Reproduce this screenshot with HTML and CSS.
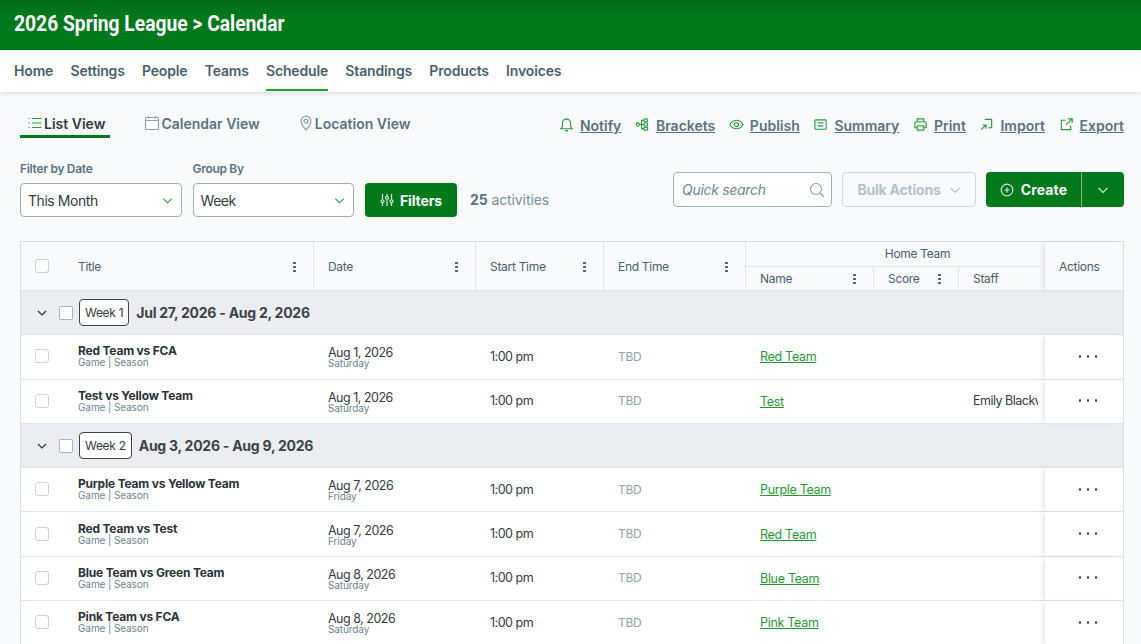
FILE: index.html
```html
<!DOCTYPE html>
<html lang="en">
<head>
  <meta charset="UTF-8">
  <title>2026 Spring League &gt; Calendar</title>
  <link rel="stylesheet" href="styles.css">
</head>
<body>
  <header class="topbar">
    <h1>2026 Spring League &gt; Calendar</h1>
  </header>
  <nav class="mainnav">
    <a href="#">Home</a>
    <a href="#">Settings</a>
    <a href="#">People</a>
    <a href="#">Teams</a>
    <a href="#" class="active">Schedule</a>
    <a href="#">Standings</a>
    <a href="#">Products</a>
    <a href="#">Invoices</a>
  </nav>

  <main class="content">
    <div class="viewbar">
      <div class="views">
        <a href="#" class="view active">
          <svg width="16" height="16" viewBox="0 0 16 16" class="ic-green"><path d="M1.5 3.5h1.200M1.500 8h1.200M1.500 12.500h1.200M5 3.500h9.500M5 8h9.500M5 12.500h9.500"/></svg>
          List View</a>
        <a href="#" class="view">
          <svg width="16" height="16" viewBox="0 0 16 16" class="ic-grey"><rect x="1.500" y="2.500" width="13" height="12" rx="1"/><path d="M1.500 5.500h13M4.500 1v2.500M11.500 1v2.500"/></svg>
          Calendar View</a>
        <a href="#" class="view">
          <svg width="16" height="16" viewBox="0 0 16 16" class="ic-grey"><path d="M8 15C5 11.500 3 9 3 6.200a5 5 0 0 1 10 0C13 9 11 11.500 8 15z"/><circle cx="8" cy="6.200" r="2"/></svg>
          Location View</a>
      </div>
      <div class="actions">
        <a href="#"><svg width="15" height="15" viewBox="0 0 16 16" class="ic-green"><path d="M2 12.500c1.200-1 1.700-2 1.700-3.500V6.500a4.300 4.300 0 0 1 8.600 0V9c0 1.500.5 2.500 1.700 3.500zM6.300 14.500h3.400M8 1v1"/></svg><span>Notify</span></a>
        <a href="#"><svg width="15" height="15" viewBox="0 0 16 16" class="ic-green"><circle cx="3" cy="8" r="1.700"/><rect x="9.500" y="2" width="4" height="3.200" rx="1"/><rect x="9.500" y="6.400" width="4" height="3.200" rx="1"/><rect x="9.500" y="10.800" width="4" height="3.200" rx="1"/><path d="M4.700 8h4.800M7 8V3.600h2.500M7 8v4.400h2.500"/></svg><span>Brackets</span></a>
        <a href="#"><svg width="15" height="15" viewBox="0 0 16 16" class="ic-green"><path d="M1 8c1.700-3 4-4.500 7-4.500S13.300 5 15 8c-1.700 3-4 4.500-7 4.500S2.700 11 1 8z"/><circle cx="8" cy="8" r="2.200"/></svg><span>Publish</span></a>
        <a href="#"><svg width="15" height="15" viewBox="0 0 16 16" class="ic-green"><rect x="2" y="3" width="12" height="10" rx="1"/><path d="M5 6.300h6M5 9.500h6"/></svg><span>Summary</span></a>
        <a href="#"><svg width="15" height="15" viewBox="0 0 16 16" class="ic-green"><path d="M4.500 5V2h7v3M4.500 11.500H2V6.500A1.500 1.500 0 0 1 3.500 5h9A1.500 1.500 0 0 1 14 6.500v5h-2.500"/><rect x="4.500" y="9.500" width="7" height="4.500"/></svg><span>Print</span></a>
        <a href="#"><svg width="15" height="15" viewBox="0 0 16 16" class="ic-green"><path d="M6 2.500h7.500v9H10M2.500 13.500 7.500 8.500M3.500 8.500h4v4"/></svg><span>Import</span></a>
        <a href="#"><svg width="15" height="15" viewBox="0 0 16 16" class="ic-green"><path d="M7 3.500H2.500v10h10V9M9.500 2H14v4.500M14 2 7.500 8.500"/></svg><span>Export</span></a>
      </div>
    </div>

    <div class="filterbar">
      <div class="filters">
        <div class="field">
          <label>Filter by Date</label>
          <div class="select">This Month
            <svg width="11" height="11" viewBox="0 0 12 12" class="ic-green"><path d="M1.500 4 6 8.500 10.500 4"/></svg></div>
        </div>
        <div class="field">
          <label>Group By</label>
          <div class="select">Week
            <svg width="11" height="11" viewBox="0 0 12 12" class="ic-green"><path d="M1.500 4 6 8.500 10.500 4"/></svg></div>
        </div>
        <button class="btn-green btn-filters">
          <svg width="14" height="14" viewBox="0 0 14 14" class="ic-white"><path d="M2.500 1v5.500M2.500 10v3M7 1v2M7 6.500V13M11.500 1v5.500M11.500 10v3"/><circle cx="2.500" cy="8.300" r="1.500"/><circle cx="7" cy="4.800" r="1.500"/><circle cx="11.500" cy="8.300" r="1.500"/></svg>
          Filters</button>
        <div class="count"><b>25</b> activities</div>
      </div>
      <div class="tools">
        <div class="search">Quick search
          <svg width="16" height="16" viewBox="0 0 16 16" class="ic-grey"><circle cx="7" cy="7" r="5.500"/><path d="M11 11l4 4"/></svg></div>
        <button class="btn-bulk">Bulk Actions
          <svg width="12" height="12" viewBox="0 0 12 12"><path d="M1.500 4 6 8.500 10.500 4"/></svg></button>
        <div class="create">
          <button class="btn-green btn-create">
            <svg width="14" height="14" viewBox="0 0 14 14" class="ic-white"><circle cx="7" cy="7" r="5.800"/><path d="M7 4.500v5M4.500 7h5"/></svg>
            Create</button>
          <button class="btn-green btn-more">
            <svg width="12" height="12" viewBox="0 0 12 12" class="ic-white"><path d="M1.500 4 6 8.500 10.500 4"/></svg></button>
        </div>
      </div>
    </div>

    <table class="schedule">
      <colgroup>
        <col class="c-check"><col class="c-title"><col class="c-date"><col class="c-start"><col class="c-end"><col class="c-name"><col class="c-score"><col class="c-staff"><col class="c-actions">
      </colgroup>
      <thead>
        <tr>
          <th rowspan="2" class="no-right"><span class="box"></span></th>
          <th rowspan="2"><div class="th-in">Title<i class="kebab"></i></div></th>
          <th rowspan="2"><div class="th-in">Date<i class="kebab"></i></div></th>
          <th rowspan="2"><div class="th-in">Start Time<i class="kebab"></i></div></th>
          <th rowspan="2"><div class="th-in">End Time<i class="kebab"></i></div></th>
          <th colspan="3" class="home-team"><div>Home Team</div></th>
          <th rowspan="2" class="col-actions">Actions</th>
        </tr>
        <tr class="sub">
          <th><div class="th-in">Name<i class="kebab"></i></div></th>
          <th><div class="th-in">Score<i class="kebab"></i></div></th>
          <th class="no-right"><div class="th-in">Staff</div></th>
        </tr>
      </thead>
      <tbody>
        <tr class="group">
          <td colspan="9"><div class="group-in">
            <svg width="10" height="10" viewBox="0 0 10 10" class="ic-dark"><path d="M1 3l4 4 4-4"/></svg>
            <span class="box box-group"></span>
            <span class="week">Week 1</span>
            <b>Jul 27, 2026 - Aug 2, 2026</b>
          </div></td>
        </tr>
        <tr>
          <td><span class="box"></span></td>
          <td><b class="game">Red Team vs FCA</b><small>Game | Season</small></td>
          <td><span class="day">Aug 1, 2026</span><small class="weekday">Saturday</small></td>
          <td class="time">1:00 pm</td>
          <td class="tbd">TBD</td>
          <td><a href="#" class="team">Red Team</a></td>
          <td></td>
          <td></td>
          <td class="col-actions"><i class="dots"></i></td>
        </tr>
        <tr>
          <td><span class="box"></span></td>
          <td><b class="game">Test vs Yellow Team</b><small>Game | Season</small></td>
          <td><span class="day">Aug 1, 2026</span><small class="weekday">Saturday</small></td>
          <td class="time">1:00 pm</td>
          <td class="tbd">TBD</td>
          <td><a href="#" class="team">Test</a></td>
          <td></td>
          <td class="staff"><div>Emily Blackwell</div></td>
          <td class="col-actions"><i class="dots"></i></td>
        </tr>
        <tr class="group">
          <td colspan="9"><div class="group-in">
            <svg width="10" height="10" viewBox="0 0 10 10" class="ic-dark"><path d="M1 3l4 4 4-4"/></svg>
            <span class="box box-group"></span>
            <span class="week">Week 2</span>
            <b>Aug 3, 2026 - Aug 9, 2026</b>
          </div></td>
        </tr>
        <tr>
          <td><span class="box"></span></td>
          <td><b class="game">Purple Team vs Yellow Team</b><small>Game | Season</small></td>
          <td><span class="day">Aug 7, 2026</span><small class="weekday">Friday</small></td>
          <td class="time">1:00 pm</td>
          <td class="tbd">TBD</td>
          <td><a href="#" class="team">Purple Team</a></td>
          <td></td>
          <td></td>
          <td class="col-actions"><i class="dots"></i></td>
        </tr>
        <tr>
          <td><span class="box"></span></td>
          <td><b class="game">Red Team vs Test</b><small>Game | Season</small></td>
          <td><span class="day">Aug 7, 2026</span><small class="weekday">Friday</small></td>
          <td class="time">1:00 pm</td>
          <td class="tbd">TBD</td>
          <td><a href="#" class="team">Red Team</a></td>
          <td></td>
          <td></td>
          <td class="col-actions"><i class="dots"></i></td>
        </tr>
        <tr>
          <td><span class="box"></span></td>
          <td><b class="game">Blue Team vs Green Team</b><small>Game | Season</small></td>
          <td><span class="day">Aug 8, 2026</span><small class="weekday">Saturday</small></td>
          <td class="time">1:00 pm</td>
          <td class="tbd">TBD</td>
          <td><a href="#" class="team">Blue Team</a></td>
          <td></td>
          <td></td>
          <td class="col-actions"><i class="dots"></i></td>
        </tr>
        <tr>
          <td><span class="box"></span></td>
          <td><b class="game">Pink Team vs FCA</b><small>Game | Season</small></td>
          <td><span class="day">Aug 8, 2026</span><small class="weekday">Saturday</small></td>
          <td class="time">1:00 pm</td>
          <td class="tbd">TBD</td>
          <td><a href="#" class="team">Pink Team</a></td>
          <td></td>
          <td></td>
          <td class="col-actions"><i class="dots"></i></td>
        </tr>
      </tbody>
    </table>
  </main>
</body>
</html>
```

FILE: styles.css
```css
* {
  box-sizing: border-box;
}
html, body {
  height: 644px;
  overflow: hidden;
}
body {
  margin: 0;
  font-family: Inter, "Noto Sans", sans-serif;
  font-size: 13px;
  letter-spacing: -0.3px;
  color: #333b40;
  background: #f9fafc;
}
a {
  color: inherit;
}
svg {
  fill: none;
  stroke: currentColor;
  stroke-width: 1.2;
  flex: none;
}
.ic-green { color: #2a9a3c; }
.ic-grey { color: #8fa3ad; }
.ic-white { color: #cfe6d3; }
.ic-dark { color: #333b40; }

.topbar {
  height: 51px;
  padding-left: 14px;
  display: flex;
  align-items: center;
  background: linear-gradient(#006a12, #00791b 30%);
  border-bottom: 1px solid #e6efe8;
}
.topbar h1 {
  margin: 0 0 3px;
  font-family: Roboto, sans-serif;
  font-size: 22px;
  font-weight: 700;
  letter-spacing: 0;
  color: #fff;
  transform: scaleX(0.875);
  transform-origin: left center;
}

.mainnav {
  height: 41px;
  padding-left: 14px;
  display: flex;
  gap: 17.2px;
  background: #fff;
  box-shadow: 0 2px 5px rgba(40, 60, 70, 0.12);
  position: relative;
}
.mainnav a {
  height: 40px;
  line-height: 39px;
  font-size: 14px;
  font-weight: 600;
  letter-spacing: -0.15px;
  color: #4a5f6b;
  text-decoration: none;
}
.mainnav a.active {
  border-bottom: 2px solid #1ea52f;
}

.content {
  padding: 0 17px 0 20px;
}

.viewbar {
  height: 46px;
  padding-top: 23px;
  display: flex;
  justify-content: space-between;
}
.views {
  display: flex;
}
.view {
  height: 23px;
  margin-right: 38px;
  display: flex;
  align-items: flex-start;
  gap: 1px;
  font-size: 14px;
  font-weight: 600;
  letter-spacing: 0;
  color: #5a7280;
  text-decoration: none;
}
.view.active {
  margin-right: 34px;
  padding: 0 5px 0 7px;
  color: #333b40;
  border-bottom: 3px solid #00791b;
}
.actions {
  display: flex;
  gap: 13.6px;
  padding-top: 2px;
}
.actions a {
  display: flex;
  align-items: flex-start;
  gap: 6px;
  font-size: 14px;
  font-weight: 600;
  letter-spacing: 0;
  color: #5a7280;
  text-decoration: none;
}
.actions span {
  text-decoration: underline;
}

.filterbar {
  display: flex;
  justify-content: space-between;
  align-items: flex-start;
  height: 103px;
  padding-top: 12px;
}
.filters {
  display: flex;
  align-items: flex-end;
  gap: 11px;
  padding-top: 11px;
}
.field label {
  display: block;
  margin-bottom: 7px;
  font-size: 12px;
  font-weight: 600;
  color: #5a7280;
}
.select {
  width: 161.5px;
  height: 34px;
  padding: 0 8px 0 7px;
  display: flex;
  align-items: center;
  justify-content: space-between;
  font-size: 14px;
  letter-spacing: -0.45px;
  background: #fff;
  border: 1px solid #9fb0b9;
  border-radius: 4px;
}
.btn-green {
  border: 0;
  color: #fff;
  font-family: inherit;
  font-weight: 700;
  font-size: 14px;
  letter-spacing: -0.1px;
  background: #00791b;
  display: flex;
  align-items: center;
  justify-content: center;
}
.btn-filters {
  width: 92px;
  height: 34px;
  gap: 6px;
  border-radius: 4px;
}
.count {
  height: 34px;
  line-height: 34px;
  margin-left: 2px;
  font-size: 14px;
  letter-spacing: -0.1px;
  color: #7a8f9a;
}
.count b {
  color: #5a7280;
}

.tools {
  display: flex;
  gap: 10px;
  margin-top: 22px;
}
.search {
  width: 159px;
  height: 35px;
  padding: 0 6px 0 8px;
  display: flex;
  align-items: center;
  justify-content: space-between;
  font-size: 14px;
  font-style: italic;
  color: #6f8693;
  background: #fff;
  border: 1px solid #9fb0b9;
  border-radius: 4px;
}
.btn-bulk {
  width: 134px;
  height: 35px;
  display: flex;
  align-items: center;
  justify-content: center;
  gap: 8px;
  font-family: inherit;
  font-size: 14px;
  font-weight: 700;
  letter-spacing: -0.2px;
  color: #b6c3ca;
  background: #f9fafc;
  border: 1px solid #cfd9de;
  border-radius: 4px;
}
.create {
  display: flex;
}
.btn-create {
  width: 96px;
  height: 35px;
  gap: 7px;
  letter-spacing: 0.1px;
  border-radius: 4px 0 0 4px;
  border-right: 1px solid #7fb88c;
}
.btn-more {
  width: 42px;
  height: 35px;
  border-radius: 0 4px 4px 0;
}

.schedule {
  width: 1104px;
  table-layout: fixed;
  border-collapse: separate;
  border-spacing: 0;
  border: 1px solid #d8e0e4;
  background: #fff;
}
.c-check { width: 43px; }
.c-title { width: 250px; }
.c-date { width: 162px; }
.c-start { width: 128px; }
.c-end { width: 142px; }
.c-name { width: 128px; }
.c-score { width: 85px; }
.c-staff { width: 86px; }
.c-actions { width: 78px; }

th {
  padding: 0 0 0 14px;
  height: 24px;
  font-weight: 400;
  font-size: 12px;
  text-align: left;
  color: #4a5f6b;
  background: #f9fafc;
  border-right: 1px solid #dfe6ea;
  border-bottom: 1px solid #dfe6ea;
}
th.no-right {
  border-right: 0;
}
.th-in {
  display: flex;
  justify-content: space-between;
  align-items: center;
  padding-right: 17px;
}
.kebab {
  width: 3px;
  height: 11px;
  background: radial-gradient(circle, #4a5f6b 1.1px, transparent 1.3px) 0 0 / 3px 4px;
}
.home-team {
  padding: 0;
  height: 25px;
  border-bottom: 0;
  border-right: 0;
}
.home-team div {
  height: 25px;
  line-height: 24px;
  margin-right: 6px;
  padding-left: 50px;
  text-align: center;
  border-bottom: 1px solid #dfe6ea;
}
.col-actions {
  padding-left: 14px;
  border-right: 0;
  background-color: #fff;
  box-shadow: -4px 0 5px -2px rgba(60, 70, 80, 0.16);
  position: relative;
}
th.col-actions {
  background-color: #f9fafc;
}

td {
  height: 44.3px;
  padding: 0 0 1px 14px;
  border-bottom: 1px solid #dfe6ea;
  white-space: nowrap;
  overflow: hidden;
}
td.col-actions {
  overflow: visible;
}
.group td {
  padding: 0;
  background: #ecedf0;
}
.group-in {
  display: flex;
  align-items: center;
  padding-left: 16px;
  font-size: 14px;
}
.group-in b {
  font-weight: 700;
  color: #3c444a;
  letter-spacing: -0.25px;
  margin-left: 7px;
}
.box {
  display: block;
  width: 14px;
  height: 14px;
  background: #fff;
  border: 1px solid #ccd3d7;
  border-radius: 3px;
}
.box-group {
  margin-left: 12px;
  border-color: #a9b7bf;
  border-radius: 2px;
}
.week {
  height: 27px;
  line-height: 25px;
  margin-left: 6px;
  padding: 0 5px;
  font-size: 12px;
  background: #fff;
  border: 1px solid #3c444a;
  border-radius: 4px;
}
.game {
  display: block;
  font-size: 12px;
  font-weight: 700;
  line-height: 13px;
  letter-spacing: -0.2px;
  color: #2b3236;
}
.day {
  display: block;
  padding-top: 2px;
  font-size: 12.5px;
  line-height: 13px;
  letter-spacing: -0.5px;
}
.time {
  font-size: 12.5px;
  letter-spacing: -0.5px;
}
small {
  display: block;
  font-size: 10px;
  line-height: 11px;
  letter-spacing: -0.1px;
  color: #6c8490;
}
small.weekday {
  line-height: 9px;
}
.tbd {
  color: #8fa3ad;
  font-size: 12px;
}
.team {
  color: #1f9a33;
  font-size: 12.5px;
}
.staff {
  font-size: 12.5px;
  letter-spacing: -0.5px;
}
.staff div {
  width: 65px;
  overflow: hidden;
}
.dots {
  display: block;
  width: 24px;
  height: 3px;
  margin-left: 17px;
  background: radial-gradient(circle, #333b40 1px, transparent 1.3px) 0 0 / 8px 3px;
}
```
